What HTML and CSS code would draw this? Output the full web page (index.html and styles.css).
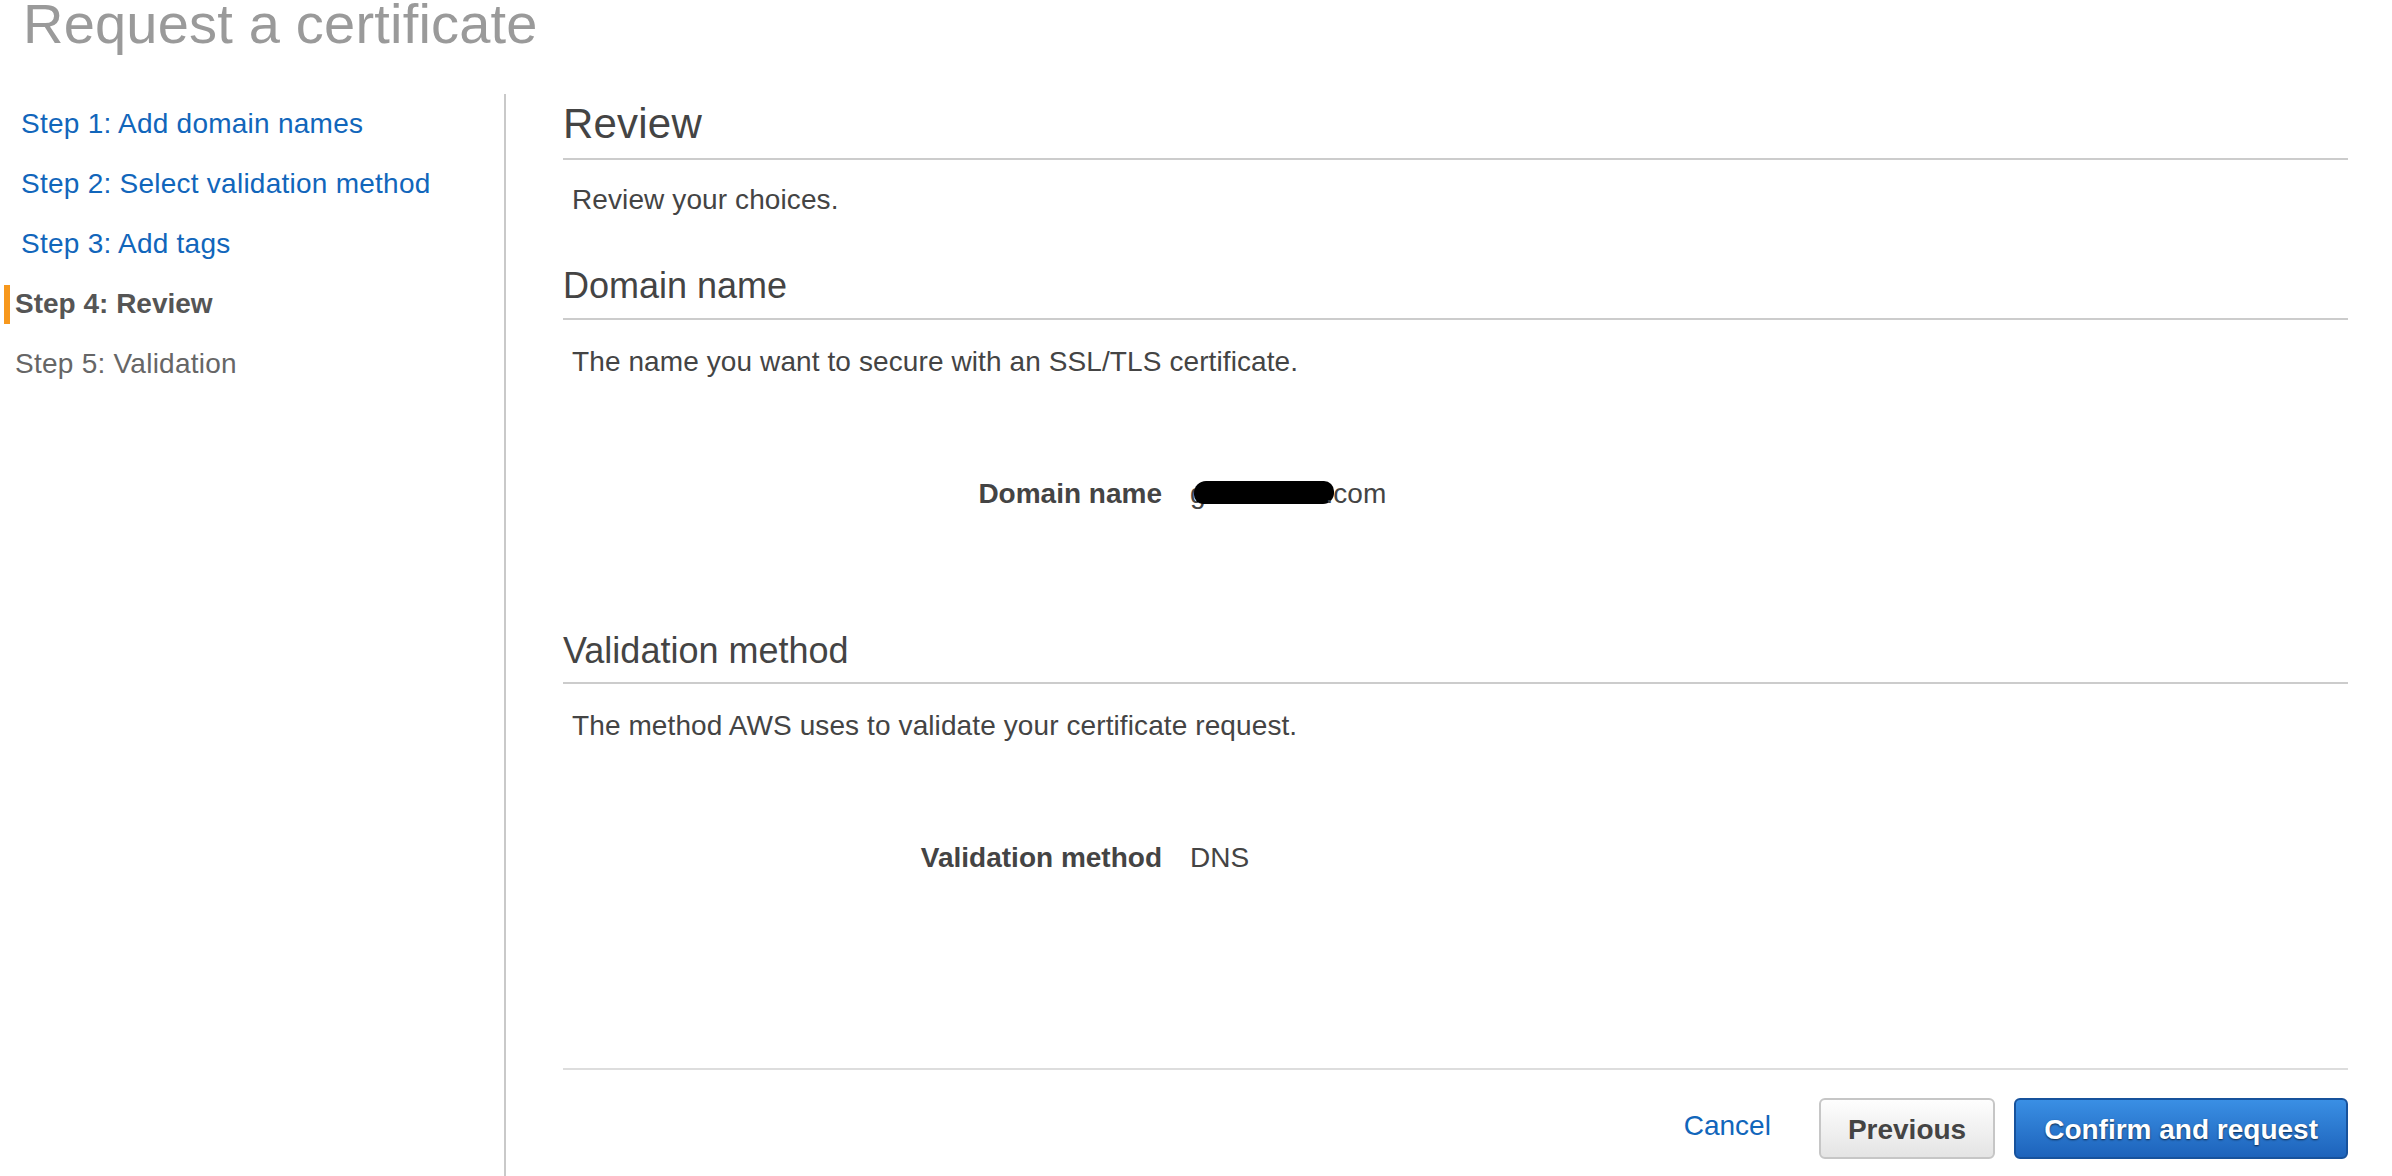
FILE: index.html
```html
<!DOCTYPE html>
<html lang="en">
<head>
<meta charset="utf-8">
<title>Request a certificate</title>
<link rel="stylesheet" href="styles.css">
</head>
<body>
<div class="page">
  <h1 class="title">Request a certificate</h1>
  <div class="layout">
    <nav class="steps">
      <a class="step step-link" href="#">Step 1: Add domain names</a>
      <a class="step step-link" href="#">Step 2: Select validation method</a>
      <a class="step step-link" href="#">Step 3: Add tags</a>
      <div class="step step-active"><span class="bar"></span><span class="step-text">Step 4: Review</span></div>
      <div class="step step-plain">Step 5: Validation</div>
    </nav>
    <main class="main">
      <h2 class="page-heading">Review</h2>
      <p class="desc desc-first">Review your choices.</p>

      <h3 class="section-heading sh-domain">Domain name</h3>
      <p class="desc">The name you want to secure with an SSL/TLS certificate.</p>
      <div class="row row-domain">
        <div class="label">Domain name</div>
        <div class="value">g<span class="redact"></span>.com</div>
      </div>

      <h3 class="section-heading sh-validation">Validation method</h3>
      <p class="desc">The method AWS uses to validate your certificate request.</p>
      <div class="row row-validation">
        <div class="label">Validation method</div>
        <div class="value">DNS</div>
      </div>

      <div class="footer">
        <a class="cancel" href="#">Cancel</a>
        <button class="btn btn-secondary" type="button">Previous</button>
        <button class="btn btn-primary" type="button">Confirm and request</button>
      </div>
    </main>
  </div>
</div>
</body>
</html>
```

FILE: styles.css
```css
html, body {
  margin: 0;
  padding: 0;
  background: #ffffff;
}

body {
  font-family: "Liberation Sans", Arial, Helvetica, sans-serif;
  color: #444444;
  overflow: hidden;
}

.page {
  display: flex;
  flex-direction: column;
  min-height: 100vh;
}

.title {
  margin: -3px 0 43px 0;
  padding-left: 23px;
  font-size: 56px;
  line-height: 54px;
  height: 54px;
  font-weight: normal;
  letter-spacing: 0.2px;
  color: #9a9a9a;
  white-space: nowrap;
}

.layout {
  display: flex;
  flex: 1;
}

.steps {
  width: 504px;
  flex: none;
  border-right: 2px solid #c9c9c9;
  display: flex;
  flex-direction: column;
}

.step {
  display: flex;
  align-items: center;
  height: 60px;
  font-size: 28px;
  line-height: 60px;
  letter-spacing: 0.25px;
  text-decoration: none;
  white-space: nowrap;
}

.step-link {
  padding-left: 21px;
  color: #1166bb;
}

.step-active {
  padding-left: 4px;
  color: #555555;
  font-weight: bold;
  letter-spacing: 0;
}

.step-active .bar {
  width: 6px;
  height: 39px;
  background: #f7981d;
  flex: none;
}

.step-active .step-text {
  margin-left: 5px;
}

.step-plain {
  padding-left: 15px;
  color: #666666;
}

.main {
  flex: 1;
  padding: 5px 44px 0 57px;
  display: flex;
  flex-direction: column;
}

.page-heading {
  margin: 0;
  font-size: 42px;
  line-height: 50px;
  font-weight: normal;
  letter-spacing: 0.2px;
  color: #444444;
  padding-bottom: 9px;
  border-bottom: 2px solid #cccccc;
}

.section-heading {
  margin: 0;
  font-size: 36px;
  line-height: 44px;
  font-weight: normal;
  color: #444444;
  border-bottom: 2px solid #cccccc;
}

.sh-domain {
  margin-top: 44px;
  padding-bottom: 10px;
}

.sh-validation {
  margin-top: 115px;
  padding-bottom: 9px;
}

.desc {
  margin: 22px 0 0 0;
  padding-left: 9px;
  font-size: 28px;
  line-height: 40px;
  letter-spacing: 0.1px;
  color: #444444;
}

.desc.desc-first {
  margin-top: 20px;
}

.row {
  display: grid;
  grid-template-columns: 599px auto;
  column-gap: 28px;
  margin-top: 92px;
  font-size: 28px;
  line-height: 40px;
}

.label {
  text-align: right;
  font-weight: bold;
  color: #444444;
}

.value {
  color: #444444;
  white-space: nowrap;
}

.redact {
  display: inline-block;
  width: 140px;
  height: 23px;
  margin-left: -12px;
  margin-right: -8px;
  vertical-align: -1px;
  background: #000000;
  border-radius: 12px 10px 11px 9px;
}

.footer {
  margin-top: 190px;
  padding-top: 28px;
  border-top: 2px solid #dddddd;
  display: flex;
  justify-content: flex-end;
  align-items: center;
}

.cancel {
  font-size: 28px;
  color: #1166bb;
  text-decoration: none;
  margin-right: 48px;
  margin-top: -6px;
}

.btn {
  height: 61px;
  border-radius: 6px;
  font-family: "Liberation Sans", Arial, Helvetica, sans-serif;
  font-size: 28px;
  font-weight: bold;
  box-sizing: border-box;
  padding-top: 4px;
  cursor: pointer;
}

.btn-secondary {
  padding-left: 27px;
  padding-right: 27px;
  color: #444444;
  background: linear-gradient(#fefefe, #e4e4e4);
  border: 2px solid #c6c6c6;
}

.btn-primary {
  margin-left: 19px;
  padding-left: 28px;
  padding-right: 28px;
  color: #ffffff;
  background: linear-gradient(#3a8fe4, #1d63bb);
  border: 2px solid #17529c;
  text-shadow: 0 1px 2px rgba(0, 0, 0, 0.65);
}
```
